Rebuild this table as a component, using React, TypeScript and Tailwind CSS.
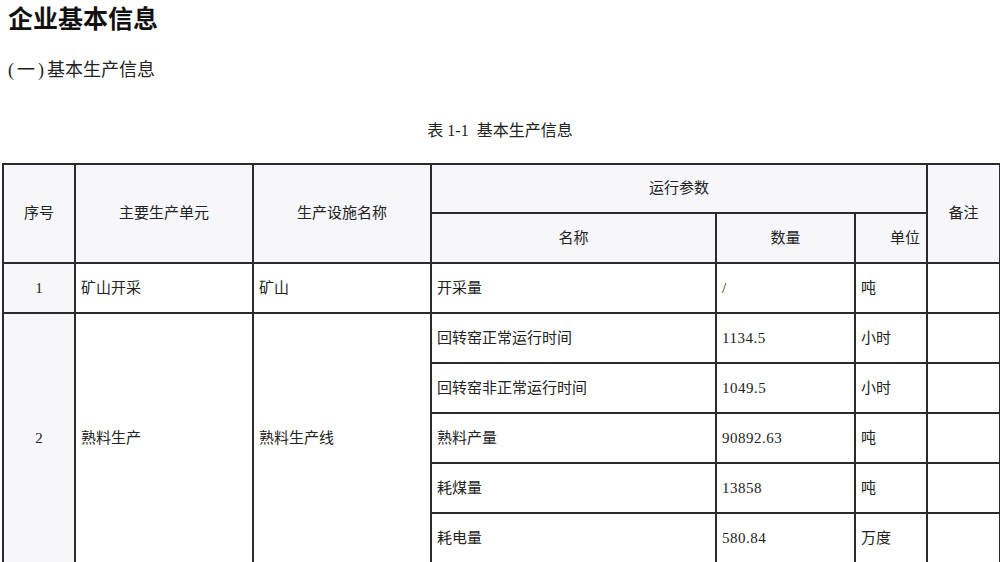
const font = { fontFamily: '"Liberation Serif", "Noto Sans CJK SC", serif' };

const th = "border-2 border-[#2b2b2b] bg-[#f6f6fb] font-normal text-[15px] text-[#222]";
const td = "border-2 border-[#2b2b2b] px-[5px] text-left text-[15px] text-[#222] font-normal";
const idx = "border-2 border-[#2b2b2b] bg-[#f6f6fb] text-center text-[15px] text-[#222]";

const params = [
  { name: "回转窑正常运行时间", qty: "1134.5", unit: "小时" },
  { name: "回转窑非正常运行时间", qty: "1049.5", unit: "小时" },
  { name: "熟料产量", qty: "90892.63", unit: "吨" },
  { name: "耗煤量", qty: "13858", unit: "吨" },
  { name: "耗电量", qty: "580.84", unit: "万度" },
];

export default function App() {
  return (
    <div className="w-[1000px] bg-white" style={font}>
      <h1 className="px-[8px] pt-[4px] text-[25px] font-bold leading-[32px] text-[#111]">企业基本信息</h1>
      <h2 className="mt-[20px] px-[8px] text-[18px] leading-[28px] text-[#222]">
        <span className="tracking-[3px]">(一)</span>基本生产信息
      </h2>
      <p className="mt-[35px] whitespace-pre text-center text-[16px] leading-[24px] text-[#222]">
        {"表 1-1  基本生产信息"}
      </p>

      <div className="mt-[20px] px-[2px]">
        <table className="w-[997px] table-fixed border-collapse">
          <colgroup>
            <col className="w-[72px]" />
            <col className="w-[178px]" />
            <col className="w-[178px]" />
            <col className="w-[285px]" />
            <col className="w-[139px]" />
            <col className="w-[72px]" />
            <col className="w-[73px]" />
          </colgroup>
          <thead>
            <tr className="h-[49px]">
              <th rowSpan={2} className={th}>序号</th>
              <th rowSpan={2} className={th}>主要生产单元</th>
              <th rowSpan={2} className={th}>生产设施名称</th>
              <th colSpan={3} className={th}>运行参数</th>
              <th rowSpan={2} className={th}>备注</th>
            </tr>
            <tr className="h-[50px]">
              <th className={th}>名称</th>
              <th className={th}>数量</th>
              <th className={`${th} pr-[6px] text-right`}>单位</th>
            </tr>
          </thead>
          <tbody>
            <tr className="h-[50px]">
              <td className={idx}>1</td>
              <td className={td}>矿山开采</td>
              <td className={td}>矿山</td>
              <td className={td}>开采量</td>
              <td className={td}>/</td>
              <td className={td}>吨</td>
              <td className={td}></td>
            </tr>
            {params.map((p, i) => (
              <tr key={p.name} className="h-[50px]">
                {i === 0 && (
                  <>
                    <td rowSpan={params.length} className={idx}>2</td>
                    <td rowSpan={params.length} className={td}>熟料生产</td>
                    <td rowSpan={params.length} className={td}>熟料生产线</td>
                  </>
                )}
                <td className={td}>{p.name}</td>
                <td className={`${td} tracking-[0.5px]`}>{p.qty}</td>
                <td className={td}>{p.unit}</td>
                <td className={td}></td>
              </tr>
            ))}
          </tbody>
        </table>
      </div>
    </div>
  );
}
